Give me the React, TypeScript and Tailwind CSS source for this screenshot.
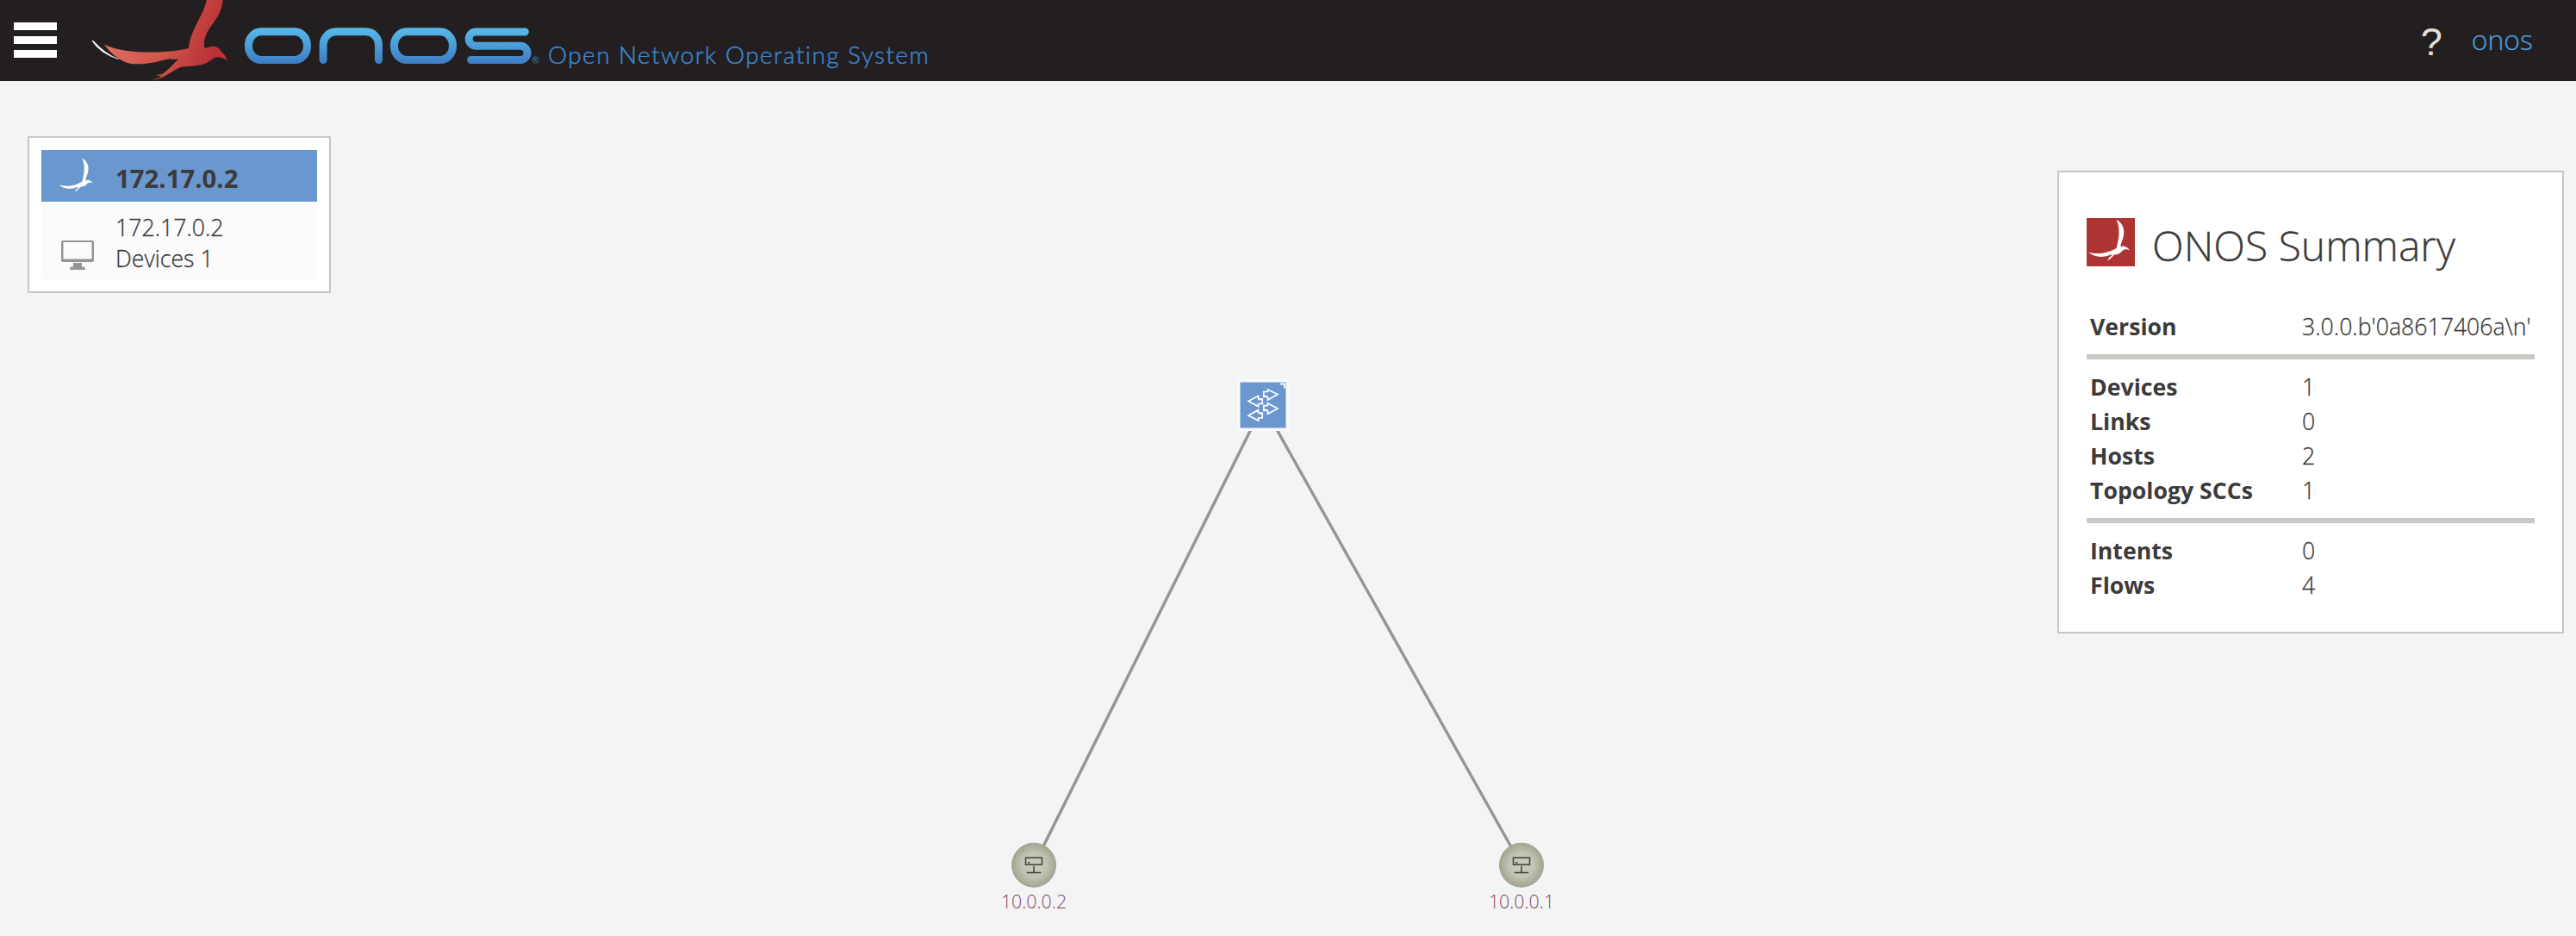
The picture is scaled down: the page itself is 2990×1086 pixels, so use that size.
import React from "react";

const BIRD =
  "M720 -4 C712 50 664 100 657 168 C600 182 450 195 363 155 C385 185 425 222 470 223 C530 224 565 208 596 204 L600 208 L608 205 L611 208 L622 204 C605 222 590 240 565 258 L541 262 L562 265 C552 272 540 277 526 281 C575 272 600 245 630 233 C665 230 690 230 710 223 C735 214 745 197 760 199 C775 200 785 203 791 213 C789 195 775 185 768 176 C758 158 740 158 718 167 Q711 168 711 158 C708 95 775 70 776 -4 Z";

const SMALL_BIRD =
  "M34.5 2 C39.500 12 37.500 24 34.500 35 C32 36.500 29.500 37.500 27 38.500 C19 41.500 10 42 2 39.500 C8 45.500 19 46.500 28 42.500 L30 42.500 L26 46 L24 49.500 C27.500 47.500 30 45 32 42.500 C36 42.500 39.500 40.500 42 37.500 C44.500 35.500 47 36 49.700 37 C48 34 46 34 45 33.200 C43.500 32 41.500 32.600 40 33.500 C38.500 32 40.500 28.500 42 24 C45 15 43 6.500 34.500 2 Z";

function Logo() {
  return (
    <div className="flex">
      <svg className="h-[94px] w-[180px]" viewBox="300 0 540 282" fill="none">
        <defs>
          <linearGradient id="red" x1="400" y1="100" x2="790" y2="240" gradientUnits="userSpaceOnUse">
            <stop offset="0" stopColor="#dd6e60" />
            <stop offset=".45" stopColor="#cf5549" />
            <stop offset=".85" stopColor="#b93137" />
            <stop offset="1" stopColor="#bd3638" />
          </linearGradient>
        </defs>
        <path d={BIRD} fill="url(#red)" />
        <path d="M320 142 Q350 188 413 206 Q364 186 326 143 Z" fill="#fff" stroke="#fff" strokeWidth="1.5" />
      </svg>
      <svg className="h-[94px] w-[352px]" viewBox="30 0 1056 282" fill="none">
        <defs>
          <linearGradient id="blue" x1="0" y1="97" x2="0" y2="222" gradientUnits="userSpaceOnUse">
            <stop offset="0" stopColor="#58bbea" />
            <stop offset="1" stopColor="#3d7cc4" />
          </linearGradient>
        </defs>
        <g stroke="url(#blue)" strokeWidth="27" strokeLinecap="round">
          <rect x="55.5" y="110.5" width="204" height="98" rx="43" ry="47" />
          <path d="M315.5 208.5 V156 A45 45 0 0 1 360 110.5 H464 A45 45 0 0 1 508.5 156 V208.5" />
          <rect x="562.5" y="110.5" width="204" height="98" rx="43" ry="47" />
          <path d="M1018 111 H847 A24.3 24.3 0 0 0 847 159.7 H1002 A24.3 24.3 0 0 1 1002 208.4 H830" />
        </g>
        <circle cx="1054" cy="208" r="11" stroke="#3f82c8" strokeWidth="2" />
        <text x="1054" y="214" textAnchor="middle" fill="#3f82c8" className="font-['Lato'] text-[17px] font-bold">R</text>
      </svg>
    </div>
  );
}

function Row({ label, value }: { label: string; value: string }) {
  return (
    <div className="flex h-10 px-1 text-[26.66px] leading-10">
      <span className="w-[246px] font-bold">{label}</span>
      <span className="font-light whitespace-nowrap [-webkit-text-stroke:0.3px_#3c3a3a]">{value}</span>
    </div>
  );
}

function Rule() {
  return <div className="my-3 h-1.5 border-2 border-[#c7c7c0] bg-[#cacaca]" />;
}

function SwitchNode() {
  return (
    <g transform="translate(1436 440)">
      <rect width="60" height="60" fill="#fafafa" />
      <rect x="3.5" y="3.5" width="53" height="53" fill="#6b97cf" stroke="#b4cbe9" />
      <path d="M50 5.5 H55 V10.5" fill="none" stroke="#fff" strokeWidth="1.8" />
      <g fill="none" stroke="#fff" strokeWidth="1.7">
        <path d="M35.5 14.5 H30.8 V20.3 H33 V18.5 M35.5 14.5 V12 L47 17.5 L35.5 24 V20.3 H34" />
        <path d="M35.5 30.7 H30.8 V36.300 H33 V34.5 M35.5 30.700 V28 L47 34 L35.5 40.300 V36.300 H34" />
        <path d="M24.500 28.500 H29.200 V22.800 H27 V24.500 M24.500 28.500 V31.500 L13 25.500 L24.500 19.300 V22.800 H26" />
        <path d="M24.500 44.800 H29.200 V39 H27 V40.800 M24.500 44.800 V48 L13 42 L24.500 35.700 V39 H26" />
      </g>
    </g>
  );
}

function Host({ x, label }: { x: number; label: string }) {
  return (
    <g transform={`translate(${x} 1003.7)`}>
      <circle r="25.5" fill="url(#host)" stroke="#a3a692" />
      <g fill="none" stroke="#3e3e3a" strokeWidth="1.5">
        <rect x="-9.5" y="-8.5" width="19" height="8" />
        <path d="M0 1 V8.5 M-8.3 8.8 H8.3 M-7 -3 H-4.5" />
      </g>
      <text
        y="50"
        textAnchor="middle"
        fill="#7e4a6b"
        className="text-[21.33px] font-light [-webkit-text-stroke:0.3px_#7e4a6b]"
      >
        {label}
      </text>
    </g>
  );
}

export default function App() {
  return (
    <div className="flex h-[1086px] w-[2990px] flex-col overflow-hidden bg-[#f4f4f4] font-['Open_Sans',sans-serif] text-[#3c3a3a]">
      <header className="flex h-[94px] shrink-0 bg-[#231f20]">
        <div className="ml-4 flex w-[84px] flex-col gap-[7px] pt-[26px]">
          <i className="h-[9px] w-[50px] bg-white" />
          <i className="h-[9px] w-[50px] bg-white" />
          <i className="h-[9px] w-[50px] bg-white" />
        </div>
        <Logo />
        <span className="ml-1 pt-[45px] font-['Lato'] text-[28px] leading-9 font-light tracking-[1.42px] whitespace-nowrap text-[#3e86cf] [-webkit-text-stroke:0.4px_#3e86cf]">
          Open Network Operating System
        </span>
        <div className="ml-auto flex">
          <span className="w-[59px] pt-[21px] font-['Liberation_Sans'] text-[45px] leading-[56px] text-[#e2e0d8]">?</span>
          <span className="mr-[50px] pt-[19px] text-[32px] leading-[54px] font-light text-[#4a9fdc] [-webkit-text-stroke:0.3px_#4a9fdc]">
            onos
          </span>
        </div>
      </header>

      <main className="relative flex flex-1 items-start justify-between">
        <svg className="absolute inset-0 h-[992px] w-[2990px]" viewBox="0 94 2990 992">
          <defs>
            <radialGradient id="host">
              <stop offset="0" stopColor="#cbcdbd" />
              <stop offset=".55" stopColor="#c2c5b4" />
              <stop offset="1" stopColor="#a2a590" />
            </radialGradient>
          </defs>
          <path d="M1200 1004 L1466 470 L1766 1004" fill="none" stroke="#969696" strokeWidth="3.5" />
          <SwitchNode />
          <Host x={1200} label="10.0.0.2" />
          <Host x={1766} label="10.0.0.1" />
        </svg>

        <section className="relative mt-16 ml-8 h-[182px] w-[352px] border-2 border-[#c7c7c0] bg-white p-3.5">
          <div className="flex h-[60px] bg-[#6b97cf]">
            <svg className="mt-2 ml-[19px] h-[46px] w-[46px]" viewBox="0 0 56 56">
              <path d={SMALL_BIRD} fill="#fff" />
            </svg>
            <span className="ml-[21px] pt-3 text-[29.33px] leading-[42px] font-bold">172.17.0.2</span>
          </div>
          <div className="flex h-[90px] bg-[#fbfbfb]">
            <svg className="mt-[45px] ml-[23px] h-[35px] w-[38px]" viewBox="0 0 38 35" fill="#939598">
              <path fillRule="evenodd" d="M2 0 H36 Q38 0 38 2 V23 Q38 25 36 25 H2 Q0 25 0 23 V2 Q0 0 2 0 Z M2.500 2 V21.500 H35.500 V2 Z" />
              <path d="M14 26 H24 V30.5 H26 Q28 30.5 28 34 H10 Q10 30.5 12 30.5 H14 Z" />
            </svg>
            <div className="ml-[25px] pt-3 text-[26.66px] leading-9 font-light [-webkit-text-stroke:0.3px_#3c3a3a]">
              <div>172.17.0.2</div>
              <div>Devices 1</div>
            </div>
          </div>
        </section>

        <section className="relative mt-[104px] mr-3.5 h-[537px] w-[588px] border-2 border-[#c7c7c0] bg-white px-8 pt-[53px]">
          <div className="flex h-[106px]">
            <svg className="h-14 w-14 bg-[#ae3433]" viewBox="0 0 56 56">
              <path d={SMALL_BIRD} fill="#fff" />
            </svg>
            <h2 className="ml-5 pt-1 text-[48px] leading-[56px] font-light whitespace-nowrap [-webkit-text-stroke:0.3px_#3c3a3a]">
              ONOS Summary
            </h2>
          </div>
          <Row label="Version" value={"3.0.0.b'0a8617406a\\n'"} />
          <Rule />
          <Row label="Devices" value="1" />
          <Row label="Links" value="0" />
          <Row label="Hosts" value="2" />
          <Row label="Topology SCCs" value="1" />
          <Rule />
          <Row label="Intents" value="0" />
          <Row label="Flows" value="4" />
        </section>
      </main>
    </div>
  );
}
